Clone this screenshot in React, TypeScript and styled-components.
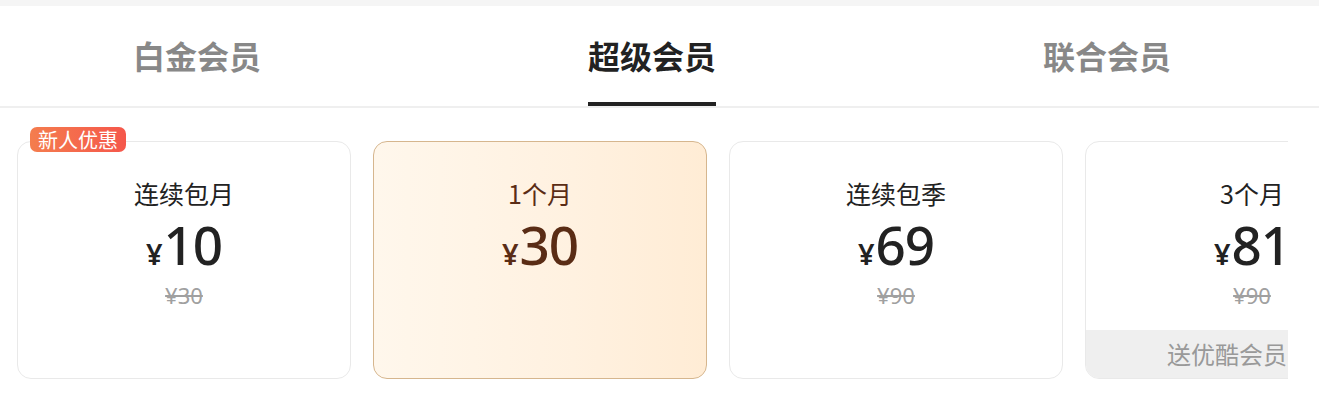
import React, { useState } from "react";
import styled, { createGlobalStyle, css } from "styled-components";

const GlobalStyle = createGlobalStyle`
  html, body {
    margin: 0;
    padding: 0;
    background: #fff;
    font-family: "Noto Sans", "Noto Sans CJK SC", sans-serif;
  }
`;

interface Plan {
  title: string;
  price: string;
  original?: string;
  badge?: string;
  gift?: string;
}

const tabs = ["白金会员", "超级会员", "联合会员"];

const plans: Plan[] = [
  { title: "连续包月", price: "10", original: "¥30", badge: "新人优惠" },
  { title: "1个月", price: "30" },
  { title: "连续包季", price: "69", original: "¥90" },
  { title: "3个月", price: "81", original: "¥90", gift: "送优酷会员" },
];

export default function App() {
  const [activeTab, setActiveTab] = useState(1);
  const [selected, setSelected] = useState(1);

  return (
    <>
      <GlobalStyle />
      <Page>
        <TopStrip />
        <TabBar>
          {tabs.map((t, i) => (
            <Tab key={t} active={i === activeTab} onClick={() => setActiveTab(i)}>
              {t}
            </Tab>
          ))}
        </TabBar>
        <PlanViewport>
          <PlanRow>
            {plans.map((p, i) => (
              <PlanCard
                key={p.title}
                selected={i === selected}
                onClick={() => setSelected(i)}
              >
                {p.badge && <Badge>{p.badge}</Badge>}
                <PlanTitle>{p.title}</PlanTitle>
                <PriceLine>
                  <Currency>¥</Currency>
                  <Amount>{p.price}</Amount>
                </PriceLine>
                {p.original && <Original>{p.original}</Original>}
                {p.gift && <Gift>{p.gift}</Gift>}
              </PlanCard>
            ))}
          </PlanRow>
        </PlanViewport>
      </Page>
    </>
  );
}

const Page = styled.div`
  width: 1319px;
  height: 415px;
  background: #fff;
  overflow: hidden;
`;

const TopStrip = styled.div`
  height: 6px;
  background: #f5f5f5;
`;

const TabBar = styled.div`
  display: flex;
  align-items: stretch;
  height: 100px;
  padding-left: 133px;
  gap: 327px;
  border-bottom: 2px solid #efefef;
`;

const Tab = styled.div<{ active: boolean }>`
  position: relative;
  display: flex;
  align-items: center;
  padding-bottom: 2px;
  font-family: "Noto Sans CJK SC", sans-serif;
  font-size: 32px;
  font-weight: 700;
  color: #888;
  cursor: pointer;

  ${({ active }) =>
    active &&
    css`
      color: #222;

      &::after {
        content: "";
        position: absolute;
        left: 0;
        right: 0;
        bottom: 0;
        height: 4px;
        background: #222;
      }
    `}
`;

const PlanViewport = styled.div`
  width: 1288px;
  overflow: hidden;
  padding-top: 33px;
`;

const PlanRow = styled.div`
  display: flex;
  gap: 22px;
  padding-left: 17px;
`;

const PlanCard = styled.div<{ selected: boolean }>`
  position: relative;
  flex: 0 0 334px;
  height: 238px;
  box-sizing: border-box;
  display: flex;
  flex-direction: column;
  align-items: center;
  padding-top: 37px;
  border: 1.5px solid #e9e9e9;
  border-radius: 14px;
  background: #fff;
  color: #222;
  cursor: pointer;

  ${({ selected }) =>
    selected &&
    css`
      border-color: #d6b68e;
      background: linear-gradient(90deg, #fff7ec 0%, #fff1e0 60%, #ffecd5 100%);
      color: #5a2c15;
    `}
`;

const Badge = styled.div`
  position: absolute;
  top: -15px;
  left: 12px;
  height: 25px;
  padding: 0 8px;
  border-radius: 7px;
  background: linear-gradient(90deg, #f47d4e 0%, #f5574b 100%);
  color: #fff;
  font-family: "Noto Sans CJK SC", sans-serif;
  font-size: 20px;
  line-height: 25px;
`;

const PlanTitle = styled.div`
  font-family: "Noto Sans CJK SC", sans-serif;
  font-size: 25px;
  line-height: 29px;
`;

const PriceLine = styled.div`
  display: flex;
  align-items: baseline;
  margin-top: 10px;
  font-family: "Noto Sans", sans-serif;
  line-height: 1;
`;

const Currency = styled.span`
  font-size: 29px;
  font-weight: 600;
  margin-right: 1px;
`;

const Amount = styled.span`
  font-size: 53px;
  font-weight: 500;
  letter-spacing: -1px;
`;

const Original = styled.div`
  margin-top: 10px;
  font-family: "Noto Sans", sans-serif;
  font-size: 22px;
  line-height: 28px;
  color: #a0a0a0;
  text-decoration: line-through;
`;

const Gift = styled.div`
  align-self: stretch;
  margin-top: auto;
  height: 48px;
  padding-right: 131px;
  border-radius: 0 0 13px 13px;
  background: #efefef;
  color: #999;
  font-family: "Noto Sans CJK SC", sans-serif;
  font-size: 24px;
  line-height: 48px;
  text-align: right;
`;
